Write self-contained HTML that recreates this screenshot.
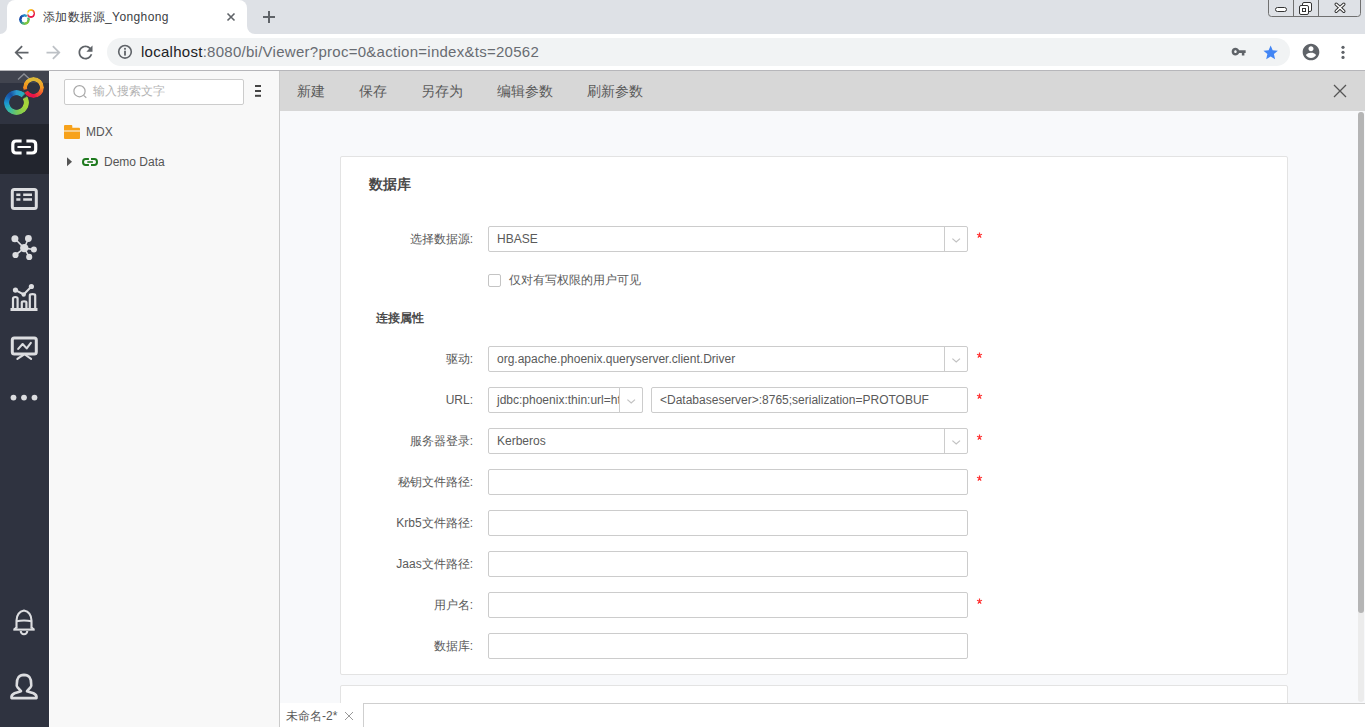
<!DOCTYPE html>
<html><head><meta charset="utf-8">
<style>
*{box-sizing:border-box;margin:0;padding:0}
html,body{width:1365px;height:727px;overflow:hidden;background:#fff;font-family:"Liberation Sans",sans-serif;position:relative}
.a{position:absolute}
svg{position:absolute;overflow:visible}
/* chrome */
#tabstrip{left:0;top:0;width:1365px;height:34px;background:#dee1e6}
#tab{left:7px;top:0;width:240px;height:34px;background:#fff;border-radius:8px 8px 0 0}
#tabtitle{left:43px;top:10px;font-size:12px;color:#3c4043;white-space:nowrap;line-height:14px;letter-spacing:0.4px}
#toolbar{left:0;top:34px;width:1365px;height:36px;background:#fff}
#omni{left:107px;top:38px;width:1183px;height:28px;background:#f1f3f4;border-radius:14px}
#url{left:141px;top:43px;font-size:15px;line-height:18px;color:#686c72;white-space:nowrap;letter-spacing:0.27px}
#url b{font-weight:normal;color:#202124}
#tbline{left:0;top:70px;width:1365px;height:1px;background:#b6b6ba}
/* app */
#side{left:0;top:71px;width:49px;height:656px;background:#2f3340}
#sidetop{left:0;top:71px;width:49px;height:12px;background:#41444f}
#sideact{left:0;top:124px;width:49px;height:50px;background:#22252e}
#panel{left:49px;top:71px;width:231px;height:656px;background:#f8f8f8;border-left:1px solid #fff;border-right:1px solid #cbcbcb}
#search{left:64px;top:79px;width:180px;height:26px;background:#fff;border:1px solid #cccccc;border-radius:2px}
#searchph{left:93px;top:84px;font-size:12px;line-height:14px;color:#b3b3b3;white-space:nowrap}
.tree{font-size:12px;color:#555;white-space:nowrap;line-height:14px}
#apptb{left:280px;top:71px;width:1085px;height:40px;background:#d7d7d7}
.tbi{top:83px;font-size:14px;line-height:16px;color:#5a5a5a;white-space:nowrap}
#main{left:280px;top:111px;width:1085px;height:592px;background:#f8f9fb}
.card{background:#fff;border:1px solid #e3e3e3;border-radius:2px}
.lbl{font-size:12px;color:#5a5a5a;white-space:nowrap;line-height:14px;text-align:right;width:200px}
.inp{left:488px;width:480px;height:26px;background:#fff;border:1px solid #cccccc;border-radius:2px}
.txt{font-size:12px;color:#5a5a5a;white-space:nowrap;line-height:14px}
.req{font-size:13px;color:#f01818;line-height:13px}
#bottom{left:280px;top:703px;width:1085px;height:24px;background:#fff}
</style></head><body>
<!-- Chrome tab strip -->
<div class="a" id="tabstrip"></div>
<div class="a" id="tab"></div>
<div class="a" style="left:0;top:26px;width:7px;height:8px;background:#fff"></div>
<div class="a" style="left:0;top:26px;width:7px;height:8px;background:#dee1e6;border-radius:0 0 7px 0"></div>
<div class="a" style="left:247px;top:26px;width:8px;height:8px;background:#fff"></div>
<div class="a" style="left:247px;top:26px;width:8px;height:8px;background:#dee1e6;border-radius:0 0 0 8px"></div>
<div class="a" id="tabtitle">添加数据源_Yonghong</div>
<div class="a" id="toolbar"></div>
<div class="a" id="omni"></div>
<div class="a" id="url"><b>localhost</b>:8080/bi/Viewer?proc=0&amp;action=index&amp;ts=20562</div>
<div class="a" id="tbline"></div>
<!-- chrome icons -->
<div class="a" style="left:18px;top:8px;width:17px;height:17px">
 <div class="a" style="left:0.5px;top:6px;width:11px;height:11px;border-radius:50%;background:conic-gradient(from 0deg,#2a90d0,#30b0b0 40deg,#60c050 100deg,#8cc83a 150deg,#50b878 200deg,#1a60b8 250deg,#1a3fa0 300deg,#2a90d0);-webkit-mask:conic-gradient(from 0deg,#000 0deg 25deg,rgba(0,0,0,.25) 45deg 55deg,#000 75deg),radial-gradient(circle,transparent 2.7px,#000 3.2px);-webkit-mask-composite:source-in"></div>
 <div class="a" style="left:8.6px;top:1px;width:8.6px;height:8.6px;border-radius:50%;background:conic-gradient(from 0deg,#f8c020,#f06030 50deg,#e8184c 100deg,#e81848 180deg,#f03848 230deg,#f8d020 290deg,#f8d020 330deg,#f8c020);-webkit-mask:conic-gradient(from 0deg,#000 0deg 240deg,rgba(0,0,0,.3) 265deg 280deg,#000 300deg),radial-gradient(circle,transparent 2.3px,#000 2.8px);-webkit-mask-composite:source-in"></div>
</div>
<svg style="left:227px;top:13px" width="8" height="8" viewBox="0 0 8 8"><path d="M0.5 0.5L7.5 7.5M7.5 0.5L0.5 7.5" stroke="#5f6368" stroke-width="1.6"/></svg>
<svg style="left:263px;top:11px" width="12" height="12" viewBox="0 0 12 12"><path d="M6 0V12M0 6H12" stroke="#5f6368" stroke-width="2"/></svg>
<svg style="left:1268px;top:-1px" width="94" height="19" viewBox="0 0 94 19">
 <path d="M0.5 0V14.5Q0.5 17.5 3.5 17.5H89.5Q92.5 17.5 92.5 14.5V0" fill="none" stroke="#707070" stroke-width="1"/>
 <path d="M25.5 0V17.5M50.5 0V17.5" stroke="#707070" stroke-width="1"/>
 <rect x="7.5" y="8.5" width="11" height="4" rx="2" fill="#fff" stroke="#333" stroke-width="1"/>
 <rect x="34.5" y="3.5" width="9" height="9" rx="1.5" fill="#fff" stroke="#333" stroke-width="1"/>
 <rect x="31.5" y="6.5" width="9" height="9" rx="1.5" fill="#fff" stroke="#333" stroke-width="1"/>
 <rect x="34.5" y="9.5" width="3" height="3" fill="#fff" stroke="#333" stroke-width="1"/>
 <path d="M68.2 5.2L75.8 12.3M75.8 5.2L68.2 12.3" stroke="#333" stroke-width="3.4" stroke-linecap="round"/>
 <path d="M68.2 5.2L75.8 12.3M75.8 5.2L68.2 12.3" stroke="#fff" stroke-width="1.5" stroke-linecap="round"/>
</svg>
<svg style="left:10.5px;top:41.5px" width="21" height="21" viewBox="0 0 24 24"><path fill="#5f6368" d="M20 11H7.83l5.59-5.59L12 4l-8 8 8 8 1.41-1.41L7.83 13H20v-2z"/></svg>
<svg style="left:42.5px;top:41.5px" width="21" height="21" viewBox="0 0 24 24"><path fill="#bdc1c6" d="M4 11h12.17l-5.59-5.59L12 4l8 8-8 8-1.41-1.41L16.17 13H4v-2z"/></svg>
<svg style="left:74.5px;top:41.5px" width="21" height="21" viewBox="0 0 24 24"><path fill="#5f6368" d="M17.65 6.35C16.2 4.9 14.21 4 12 4c-4.42 0-7.99 3.58-7.99 8s3.57 8 7.99 8c3.73 0 6.84-2.55 7.73-6h-2.08c-.82 2.33-3.04 4-5.65 4-3.31 0-6-2.69-6-6s2.69-6 6-6c1.66 0 3.14.69 4.22 1.78L13 11h7V4l-2.35 2.35z"/></svg>
<svg style="left:117px;top:44px" width="16" height="16" viewBox="0 0 16 16"><circle cx="8" cy="7.8" r="6.3" fill="none" stroke="#5f6368" stroke-width="1.6"/><rect x="7.1" y="3.9" width="1.8" height="1.8" fill="#5f6368"/><rect x="7.1" y="6.7" width="1.8" height="4.9" fill="#5f6368"/></svg>
<svg style="left:1231.4px;top:43.5px" width="15.3" height="15.3" viewBox="0 0 24 24"><path fill="#5f6368" d="M12.65 10C11.83 7.67 9.61 6 7 6c-3.31 0-6 2.69-6 6s2.69 6 6 6c2.61 0 4.83-1.67 5.65-4H17v4h4v-4h2v-4H12.65zM7 14c-1.1 0-2-.9-2-2s.9-2 2-2 2 .9 2 2-.9 2-2 2z"/></svg>
<svg style="left:1262.2px;top:43.6px" width="17.3" height="17.3" viewBox="0 0 24 24"><path fill="#4285f4" d="M12 17.27L18.18 21l-1.64-7.03L22 9.24l-7.19-.61L12 2 9.19 8.63 2 9.24l5.46 4.73L5.82 21z"/></svg>
<svg style="left:1301px;top:42px" width="20" height="20" viewBox="0 0 24 24"><path fill="#5f6368" d="M12 2C6.48 2 2 6.48 2 12s4.48 10 10 10 10-4.48 10-10S17.52 2 12 2zm0 3c1.66 0 3 1.34 3 3s-1.34 3-3 3-3-1.34-3-3 1.34-3 3-3zm0 14.2c-2.5 0-4.71-1.28-6-3.22.03-1.99 4-3.08 6-3.08 1.99 0 5.97 1.09 6 3.08-1.29 1.94-3.5 3.22-6 3.22z"/></svg>
<svg style="left:1341px;top:45px" width="4" height="15" viewBox="0 0 4 15"><circle cx="2" cy="2.3" r="1.6" fill="#5f6368"/><circle cx="2" cy="7.3" r="1.6" fill="#5f6368"/><circle cx="2" cy="12.4" r="1.6" fill="#5f6368"/></svg>


<!-- sidebar -->
<div class="a" id="side"></div>
<div class="a" id="sidetop"></div>
<div class="a" id="sideact"></div>
<!-- sidebar icons -->
<svg style="left:0;top:71px" width="49" height="12" viewBox="0 0 49 12"><path d="M18 8.5L24 3L29.5 8" fill="none" stroke="#8a8d95" stroke-width="1.3"/></svg>
<div class="a" style="left:4px;top:90px;width:25px;height:25px;border-radius:50%;background:conic-gradient(from 0deg,#2a9ad0 0deg,#28b0b8 40deg,#9ed040 65deg,#a8d838 110deg,#78c858 175deg,#35b8a8 225deg,#1a98d0 265deg,#1860b0 305deg,#1850a0 325deg,#2a9ad0 360deg);-webkit-mask:conic-gradient(from 0deg,#000 0deg 40deg,transparent 48deg 56deg,#000 64deg),radial-gradient(circle,transparent 6.9px,#000 7.6px);-webkit-mask-composite:source-in"></div>
<div class="a" style="left:22.6px;top:76.8px;width:21.4px;height:21.4px;border-radius:50%;background:conic-gradient(from 0deg,#d8b838 0deg,#e8b030 45deg,#f59a25 90deg,#f05030 135deg,#e8104a 180deg,#e82040 230deg,#f08a20 265deg,#f0a020 300deg,#e0b838 330deg,#d8b838 360deg);-webkit-mask:conic-gradient(from 0deg,#000 0deg 236deg,transparent 244deg 252deg,#000 260deg),radial-gradient(circle,transparent 6px,#000 6.7px);-webkit-mask-composite:source-in"></div>
<svg style="left:0;top:124px" width="49" height="50" viewBox="0 0 49 50">
 <path d="M20 17H16Q12.8 17 12.8 20.5V25.5Q12.8 29 16 29H20M28 17H32Q35.7 17 35.7 20.5V25.5Q35.7 29 32 29H28" fill="none" stroke="#fff" stroke-width="3.2" stroke-linecap="square"/>
 <path d="M18.3 23H30" stroke="#fff" stroke-width="2.2" stroke-linecap="round"/>
</svg>
<svg style="left:0;top:174px" width="49" height="50" viewBox="0 0 49 50" fill="none" stroke="#dcdde0">
 <rect x="12.3" y="15.5" width="24" height="19" rx="2" stroke-width="3"/>
 <path d="M16.3 20.7H20.4M16.3 25.5H20.4M23.2 20.7H32M23.2 25.5H32" stroke-width="2.6"/>
</svg>
<svg style="left:0;top:224px" width="49" height="50" viewBox="0 0 49 50" fill="#dcdde0" stroke="#dcdde0">
 <path d="M24.25 24.1L14.9 14.7M24.25 24.1L28.4 14.5M24.25 24.1L33.9 25.5M24.25 24.1L15.5 31M24.25 24.1L29.2 32.9" stroke-width="1.6"/>
 <circle cx="24.25" cy="24.1" r="4.2" stroke="none"/>
 <circle cx="14.9" cy="14.7" r="3.5" stroke="none"/>
 <circle cx="28.4" cy="14.5" r="3.4" stroke="none"/>
 <circle cx="33.9" cy="25.5" r="3" stroke="none"/>
 <circle cx="15.5" cy="31" r="3.1" stroke="none"/>
 <circle cx="29.2" cy="32.9" r="3.1" stroke="none"/>
</svg>
<svg style="left:0;top:274px" width="49" height="50" viewBox="0 0 49 50" fill="none" stroke="#dcdde0">
 <path d="M10.5 35.5H37.5" stroke-width="3"/>
 <path d="M13 34V24.5Q13 23 15.3 23Q17.6 23 17.6 24.5V34M21.8 34V28.5Q21.8 27.3 24.1 27.3Q26.4 27.3 26.4 28.5V34M29.8 34V21.5Q29.8 20.2 32.5 20.2Q35.2 20.2 35.2 21.5V34" stroke-width="2.2"/>
 <path d="M15.45 16.1L23.7 20.5L31.4 12.5" stroke-width="2"/>
 <circle cx="15.45" cy="16.1" r="2.6" fill="#dcdde0" stroke="none"/>
 <circle cx="23.7" cy="20.5" r="2.2" fill="#dcdde0" stroke="none"/>
 <circle cx="31.4" cy="12.5" r="2.6" fill="#dcdde0" stroke="none"/>
</svg>
<svg style="left:0;top:324px" width="49" height="50" viewBox="0 0 49 50" fill="none" stroke="#dcdde0">
 <rect x="12.3" y="14" width="24" height="16" rx="2" stroke-width="3"/>
 <path d="M18.2 24.9L22.6 20L26.7 24.4L30.85 18.9" stroke-width="2.1" stroke-linecap="round" stroke-linejoin="round"/>
 <path d="M23.2 31L17.4 34.8M25.5 31L31.1 34.8" stroke-width="2.1" stroke-linecap="round"/>
</svg>
<svg style="left:0;top:374px" width="49" height="50" viewBox="0 0 49 50" fill="#dcdde0">
 <circle cx="13.5" cy="23.6" r="2.9"/><circle cx="24" cy="23.6" r="2.9"/><circle cx="34.5" cy="23.6" r="2.9"/>
</svg>
<svg style="left:0;top:598px" width="49" height="50" viewBox="0 0 49 50" fill="none" stroke="#dcdde0" stroke-width="2.1">
 <path d="M16.5 30.5V22.5Q16.8 14 24 12.5Q31.2 14 31.5 22.5V30.5"/>
 <path d="M16.3 23.3Q24 21.8 31.7 23.3"/>
 <path d="M14.3 31.3Q16.3 30 16.3 29M31.7 29Q31.7 30 33.7 31.3"/>
 <path d="M13.3 31.6H34.7"/>
 <path d="M20.7 33Q21 36.2 24 36.2Q27 36.2 27.3 33"/>
</svg>
<svg style="left:0;top:662px" width="49" height="50" viewBox="0 0 49 50" fill="none" stroke="#dcdde0" stroke-width="2.6" stroke-linejoin="round">
 <path d="M21 29.2L17.6 25.4Q16.2 24.2 16.8 22.2Q16.5 13 24 12.9Q31.5 13 31.2 22.2Q31.8 24.2 30.4 25.4L27 29.2Q30 30 33.5 31.2Q37 32.8 36.5 36.1H11.5Q11 32.8 14.5 31.2Q18 30 21 29.2Z"/>
</svg>


<!-- panel -->
<div class="a" id="panel"></div>
<div class="a" id="search"></div>

<svg style="left:72px;top:84px" width="16" height="16" viewBox="0 0 16 16" fill="none" stroke="#a8a8a8" stroke-width="1.2"><circle cx="7.5" cy="7.2" r="5.6"/><path d="M11.6 11.4L14.3 13.8"/></svg>
<svg style="left:254px;top:84px" width="8" height="14" viewBox="0 0 8 14" fill="#444"><rect x="1" y="1" width="6" height="2"/><rect x="1" y="6" width="6" height="2"/><rect x="1" y="10.8" width="6" height="2"/></svg>
<svg style="left:64px;top:125px" width="16" height="14" viewBox="0 0 16 14"><path d="M0 1Q0 0 1 0H7.5Q8.3 0 8.3 1V2.8H15Q16 2.8 16 3.8V5.6H0Z" fill="#f7a21b"/><path d="M0 6.6H16V13Q16 14 15 14H1Q0 14 0 13Z" fill="#f7a21b"/></svg>
<svg style="left:66px;top:157px" width="7" height="10" viewBox="0 0 7 10"><path d="M1 0.3L6 4.8L1 9.3Z" fill="#555"/></svg>
<svg style="left:81px;top:157px" width="18" height="10" viewBox="0 0 18 10" fill="none" stroke="#1e7a1e"><path d="M7.9 2H4.6Q2 2 2 5Q2 8 4.6 8H7.9M10 2H13.4Q16 2 16 5Q16 8 13.4 8H10" stroke-width="2"/><path d="M6.3 5H11.9" stroke-width="1.6"/></svg>
<div class="a" id="searchph">输入搜索文字</div>
<div class="a tree" style="left:86px;top:125px">MDX</div>
<div class="a tree" style="left:104px;top:155px">Demo Data</div>

<!-- app toolbar -->
<div class="a" id="apptb"></div>
<div class="a tbi" style="left:297px">新建</div>
<div class="a tbi" style="left:359px">保存</div>
<div class="a tbi" style="left:421px">另存为</div>
<div class="a tbi" style="left:497px">编辑参数</div>
<div class="a tbi" style="left:587px">刷新参数</div>

<!-- main -->
<div class="a" id="main"></div>
<div class="a card" style="left:340px;top:156px;width:948px;height:519px"></div>
<div class="a card" style="left:340px;top:685px;width:948px;height:40px"></div>

<!-- form -->
<div class="a" style="left:369px;top:176px;font-size:14px;font-weight:bold;color:#4a4a4a;line-height:16px;white-space:nowrap">数据库</div>
<div class="a lbl" style="left:273px;top:232px">选择数据源:</div>
<div class="a inp" style="top:226px"></div>
<div class="a" style="left:944px;top:226px;width:1px;height:26px;background:#ccc"></div>
<div class="a txt" style="left:497px;top:232px">HBASE</div>
<svg style="left:975.5px;top:232px" width="7" height="7" viewBox="0 0 7 7" fill="none" stroke="#f33" stroke-width="1.2"><path d="M3.5 0.4V3.4M1 2.2L3.5 3.2L6 2.2M1.9 5.7L3.5 3.4L5.1 5.7"/></svg>

<div class="a" style="left:488px;top:274px;width:13px;height:13px;border:1px solid #c4c4c4;border-radius:2px;background:#fff"></div>
<div class="a txt" style="left:509px;top:273px">仅对有写权限的用户可见</div>

<div class="a" style="left:376px;top:311px;font-size:12px;font-weight:bold;color:#4a4a4a;line-height:14px;white-space:nowrap">连接属性</div>

<div class="a lbl" style="left:273px;top:352px">驱动:</div>
<div class="a inp" style="top:346px"></div>
<div class="a" style="left:944px;top:346px;width:1px;height:26px;background:#ccc"></div>
<div class="a txt" style="left:497px;top:352px">org.apache.phoenix.queryserver.client.Driver</div>
<svg style="left:975.5px;top:352px" width="7" height="7" viewBox="0 0 7 7" fill="none" stroke="#f33" stroke-width="1.2"><path d="M3.5 0.4V3.4M1 2.2L3.5 3.2L6 2.2M1.9 5.7L3.5 3.4L5.1 5.7"/></svg>

<div class="a lbl" style="left:273px;top:393px">URL:</div>
<div class="a inp" style="top:387px;width:155px;overflow:hidden"><div class="a txt" style="left:8px;top:5px">jdbc:phoenix:thin:url=htt</div></div>
<div class="a" style="left:619px;top:387px;width:24px;height:26px;border:1px solid #ccc;border-radius:0 2px 2px 0;background:#fff"></div>
<div class="a inp" style="left:651px;top:387px;width:317px"></div>
<div class="a txt" style="left:660px;top:393px">&lt;Databaseserver&gt;:8765;serialization=PROTOBUF</div>
<svg style="left:975.5px;top:393px" width="7" height="7" viewBox="0 0 7 7" fill="none" stroke="#f33" stroke-width="1.2"><path d="M3.5 0.4V3.4M1 2.2L3.5 3.2L6 2.2M1.9 5.7L3.5 3.4L5.1 5.7"/></svg>

<div class="a lbl" style="left:273px;top:434px">服务器登录:</div>
<div class="a inp" style="top:428px"></div>
<div class="a" style="left:944px;top:428px;width:1px;height:26px;background:#ccc"></div>
<div class="a txt" style="left:497px;top:434px">Kerberos</div>
<svg style="left:975.5px;top:434px" width="7" height="7" viewBox="0 0 7 7" fill="none" stroke="#f33" stroke-width="1.2"><path d="M3.5 0.4V3.4M1 2.2L3.5 3.2L6 2.2M1.9 5.7L3.5 3.4L5.1 5.7"/></svg>

<div class="a lbl" style="left:273px;top:475px">秘钥文件路径:</div>
<div class="a inp" style="top:469px"></div>
<svg style="left:975.5px;top:475px" width="7" height="7" viewBox="0 0 7 7" fill="none" stroke="#f33" stroke-width="1.2"><path d="M3.5 0.4V3.4M1 2.2L3.5 3.2L6 2.2M1.9 5.7L3.5 3.4L5.1 5.7"/></svg>

<div class="a lbl" style="left:273px;top:516px">Krb5文件路径:</div>
<div class="a inp" style="top:510px"></div>

<div class="a lbl" style="left:273px;top:557px">Jaas文件路径:</div>
<div class="a inp" style="top:551px"></div>

<div class="a lbl" style="left:273px;top:598px">用户名:</div>
<div class="a inp" style="top:592px"></div>
<svg style="left:975.5px;top:598px" width="7" height="7" viewBox="0 0 7 7" fill="none" stroke="#f33" stroke-width="1.2"><path d="M3.5 0.4V3.4M1 2.2L3.5 3.2L6 2.2M1.9 5.7L3.5 3.4L5.1 5.7"/></svg>

<div class="a lbl" style="left:273px;top:639px">数据库:</div>
<div class="a inp" style="top:633px"></div>

<svg style="left:952px;top:238px" width="9" height="5" viewBox="0 0 9 5"><path d="M0.4 0.6L4.2 3.9L8 0.6" fill="none" stroke="#c2c2c2" stroke-width="1.25"/></svg>
<svg style="left:952px;top:358px" width="9" height="5" viewBox="0 0 9 5"><path d="M0.4 0.6L4.2 3.9L8 0.6" fill="none" stroke="#c2c2c2" stroke-width="1.25"/></svg>
<svg style="left:952px;top:440px" width="9" height="5" viewBox="0 0 9 5"><path d="M0.4 0.6L4.2 3.9L8 0.6" fill="none" stroke="#c2c2c2" stroke-width="1.25"/></svg>
<svg style="left:627px;top:399px" width="9" height="5" viewBox="0 0 9 5"><path d="M0.4 0.6L4.2 3.9L8 0.6" fill="none" stroke="#c2c2c2" stroke-width="1.25"/></svg>
<div class="a" id="bottom"></div>
<div class="a" style="left:363px;top:703px;width:1002px;height:24px;border-top:1px solid #cfcfcf;border-left:1px solid #cfcfcf;background:#fff"></div>
<div class="a txt" style="left:286px;top:709px">未命名-2*</div>
<svg style="left:344px;top:711px" width="10" height="10" viewBox="0 0 10 10"><path d="M1 1L9 9M9 1L1 9" stroke="#999" stroke-width="1"/></svg>
<div class="a" style="left:1358px;top:112px;width:6px;height:590px;background:#ececec;border-radius:3px"></div>
<div class="a" style="left:1358px;top:112px;width:6px;height:501px;background:#b5b5b5;border-radius:3px"></div>
<svg style="left:1334px;top:85px" width="12" height="12" viewBox="0 0 12 12"><path d="M0 0L12 12M12 0L0 12" stroke="#555" stroke-width="1.3"/></svg>

</body></html>
